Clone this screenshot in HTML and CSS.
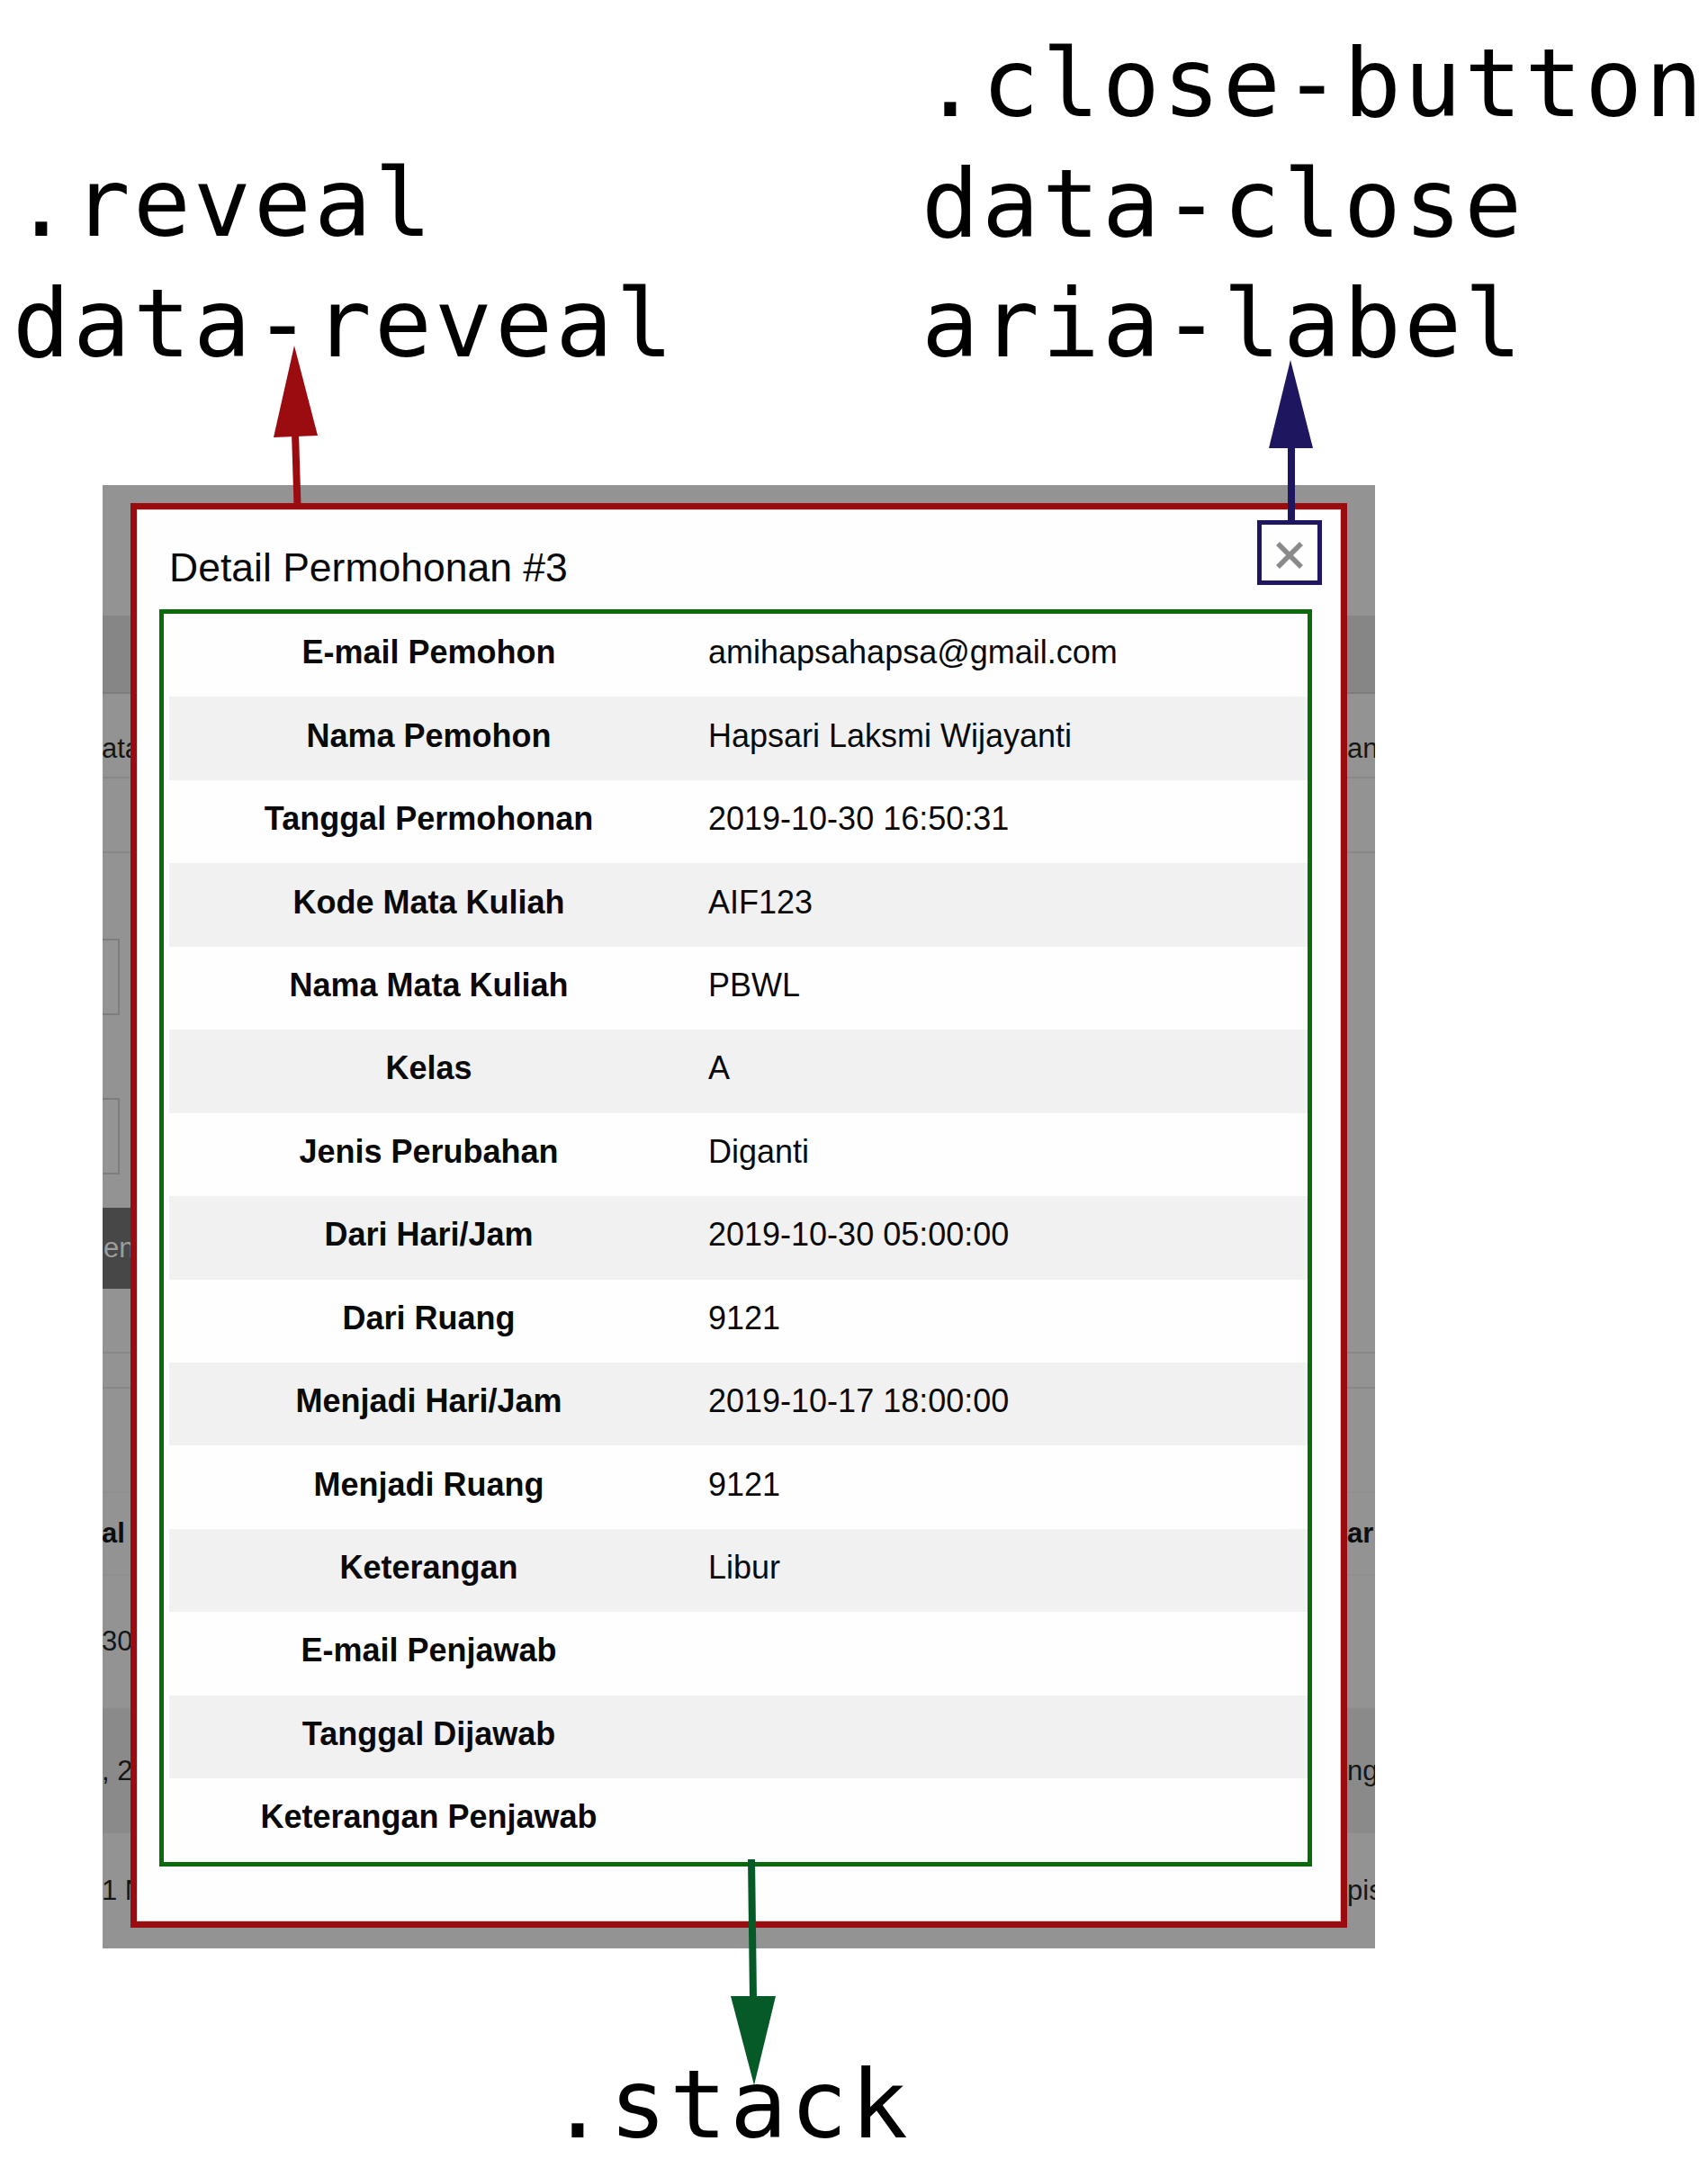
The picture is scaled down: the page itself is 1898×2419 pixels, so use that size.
FILE: index.html
```html
<!DOCTYPE html>
<html lang="id">
<head>
<meta charset="utf-8">
<title>Detail Permohonan #3</title>
<link rel="stylesheet" href="styles.css">
</head>
<body>
<div class="canvas">
  <div class="annot-top">
    <div class="lbl lbl-reveal">
      <div>.reveal</div>
      <div>data-reveal</div>
    </div>
    <div class="lbl lbl-close">
      <div>.close-button</div>
      <div>data-close</div>
      <div>aria-label</div>
    </div>
  </div>

  <div class="shot">
    <div class="under">
      <div class="band b1"></div>
      <div class="band b2"></div>
      <div class="band b3 txt"><span class="l">ata Pemohon</span><span class="r">an</span></div>
      <div class="band b4"></div>
      <div class="band b5"></div>
      <div class="band b6"><div class="field"></div></div>
      <div class="band b7"></div>
      <div class="band b8"><div class="field"></div></div>
      <div class="band b9"></div>
      <div class="band b10"><div class="btn-under">en</div></div>
      <div class="band b11"></div>
      <div class="band b12"></div>
      <div class="band b13"></div>
      <div class="band b14 txt bold"><span class="l">al</span><span class="r">ar</span></div>
      <div class="band b15 txt"><span class="l">30</span></div>
      <div class="band b16 txt"><span class="l">, 2</span><span class="r">ng</span></div>
      <div class="band b17 txt"><span class="l">1 N</span><span class="r">pis</span></div>
    </div>

    <div class="reveal" data-reveal>
      <h4 class="reveal-title">Detail Permohonan #3</h4>
      <button class="close-button" data-close aria-label="Close modal" type="button">
        <svg width="30" height="30" viewBox="0 0 30 30"><path d="M2 2L28 28M28 2L2 28" stroke="#8a8a8a" stroke-width="5.5" fill="none"/></svg>
      </button>
      <div class="stack">
        <table class="detail">
          <tbody>
            <tr><th>E-mail Pemohon</th><td>amihapsahapsa@gmail.com</td></tr>
            <tr><th>Nama Pemohon</th><td>Hapsari Laksmi Wijayanti</td></tr>
            <tr><th>Tanggal Permohonan</th><td>2019-10-30 16:50:31</td></tr>
            <tr><th>Kode Mata Kuliah</th><td>AIF123</td></tr>
            <tr><th>Nama Mata Kuliah</th><td>PBWL</td></tr>
            <tr><th>Kelas</th><td>A</td></tr>
            <tr><th>Jenis Perubahan</th><td>Diganti</td></tr>
            <tr><th>Dari Hari/Jam</th><td>2019-10-30 05:00:00</td></tr>
            <tr><th>Dari Ruang</th><td>9121</td></tr>
            <tr><th>Menjadi Hari/Jam</th><td>2019-10-17 18:00:00</td></tr>
            <tr><th>Menjadi Ruang</th><td>9121</td></tr>
            <tr><th>Keterangan</th><td>Libur</td></tr>
            <tr><th>E-mail Penjawab</th><td></td></tr>
            <tr><th>Tanggal Dijawab</th><td></td></tr>
            <tr><th>Keterangan Penjawab</th><td></td></tr>
          </tbody>
        </table>
      </div>
    </div>
  </div>

  <div class="annot-bottom">
    <div class="lbl">.stack</div>
  </div>

  <svg class="arrows" width="1898" height="2419" viewBox="0 0 1898 2419">
    <line x1="330.5" y1="562" x2="328" y2="480" stroke="#9b0c10" stroke-width="8"/>
    <polygon points="304,486 353,484 327,384" fill="#9b0c10"/>
    <line x1="1435" y1="580" x2="1435" y2="494" stroke="#1e1760" stroke-width="8"/>
    <polygon points="1410,498 1459,498 1434,400" fill="#1e1760"/>
    <line x1="835" y1="2066" x2="837" y2="2222" stroke="#065a28" stroke-width="8"/>
    <polygon points="812,2218 862,2218 838,2317" fill="#065a28"/>
  </svg>
</div>
</body>
</html>
```

FILE: styles.css
```css
* {
  box-sizing: border-box;
}

html,
body {
  margin: 0;
  padding: 0;
  background: #ffffff;
  overflow: hidden;
}

.canvas {
  position: relative;
  width: 1898px;
  height: 2419px;
}

/* ---------- annotation labels ---------- */
.lbl {
  font-family: "DejaVu Sans Mono", monospace;
  font-size: 106px;
  letter-spacing: 3.2px;
  line-height: 133.5px;
  color: #000;
  white-space: nowrap;
}

.annot-top {
  display: flex;
  height: 539px;
}

.lbl-reveal {
  margin-left: 14px;
  width: 1010px;
  flex: none;
  padding-top: 159px;
}

.lbl-close {
  padding-top: 26px;
}

.annot-bottom {
  padding-top: 107px;
  padding-left: 610px;
}

.arrows {
  position: absolute;
  left: 0;
  top: 0;
  pointer-events: none;
}

/* ---------- screenshot frame ---------- */
.shot {
  position: relative;
  margin-left: 114px;
  width: 1414px;
  height: 1626px;
  overflow: hidden;
  background: #939393;
}

/* underlying page (dimmed by the overlay) */
.under {
  display: flex;
  flex-direction: column;
  font-family: "Liberation Sans", Arial, sans-serif;
  font-size: 31px;
  color: #161616;
}

.band {
  display: flex;
  align-items: center;
  flex: none;
}

.band.txt .l {
  margin-left: -1px;
  white-space: nowrap;
  width: 40px;
  overflow: visible;
}

.band.txt .r {
  margin-left: auto;
  width: 31px;
  white-space: nowrap;
  overflow: visible;
}

.band.bold {
  font-weight: bold;
  color: #0d0d0d;
}

.b1 { height: 145px; }
.b2 { height: 87px; background: #868686; border-bottom: 2px solid #7c7c7c; }
.b3 { height: 94px; padding-top: 30px; border-bottom: 2px solid #888888; }
.b4 { height: 83px; border-bottom: 2px solid #888888; }
.b5 { height: 95px; }
.b6 { height: 85px; }
.b7 { height: 92px; }
.b8 { height: 85px; }
.b9 { height: 37px; }
.b10 { height: 90px; }
.b11 { height: 72px; border-bottom: 2px solid #878787; }
.b12 { height: 39px; border-bottom: 2px solid #878787; }
.b13 { height: 116px; border-bottom: 1px solid #8d8d8d; }
.b14 { height: 91px; border-bottom: 1px solid #8d8d8d; }
.b15 { height: 148px; }
.b16 { height: 139px; background: #8a8a8a; }
.b17 { height: 128px; }

.field {
  margin-left: -50px;
  width: 69px;
  height: 85px;
  border: 2px solid #7d7d7d;
  background: #949494;
}

.btn-under {
  margin-left: -60px;
  width: 100px;
  height: 90px;
  background: #474747;
  color: #9d9d9d;
  display: flex;
  align-items: center;
  padding-left: 61px;
  white-space: nowrap;
}

/* ---------- modal ---------- */
.reveal {
  position: absolute;
  left: 31px;
  top: 20px;
  width: 1352px;
  border: 7px solid #9b0c10;
  background: #fefefe;
  box-shadow: inset 0 0 0 1px #d4d4d4;
  padding: 33px 32px 61px 36px;
  font-family: "Liberation Sans", Arial, sans-serif;
  color: #0a0a0a;
}

.reveal-title {
  margin: 0 0 15px 0;
  font-size: 44.5px;
  line-height: 63px;
  font-weight: normal;
  color: #0a0a0a;
}

.close-button {
  position: absolute;
  top: 12px;
  right: 21px;
  width: 72px;
  height: 72px;
  margin: 0;
  padding: 6px 0 0 0;
  border: 5px solid #1e1760;
  background: transparent;
  display: flex;
  align-items: center;
  justify-content: center;
  cursor: pointer;
}

.close-button svg {
  display: block;
}

.stack {
  margin-left: -11px;
  border: 5px solid #0b6a0b;
  padding-left: 6px;
}

.detail {
  width: 100%;
  border-collapse: collapse;
  font-size: 36px;
  color: #0a0a0a;
}

.detail tr {
  height: 92.45px;
}

.detail tr:nth-child(odd) {
  background: #fefefe;
}

.detail tr:nth-child(even) {
  background: #f1f1f1;
}

.detail th {
  width: 577px;
  font-weight: bold;
  text-align: center;
  padding: 16px 14px 22px;
  line-height: 54px;
}

.detail td {
  text-align: left;
  padding: 16px 14px 22px 22px;
  line-height: 54px;
}
```
